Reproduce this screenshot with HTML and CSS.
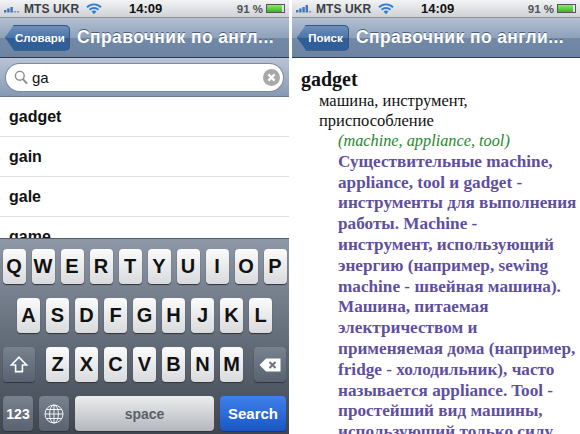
FILE: index.html
```html
<!DOCTYPE html>
<html lang="en">
<head>
    <meta charset="UTF-8">
    <meta name="viewport" content="width=device-width, initial-scale=1.0">
    <title>Dictionary</title>
    <link rel="stylesheet" href="styles.css">
</head>
<body>
    <div class="screens">
        <!-- search screen -->
        <div class="phone phone-left">
            <div class="status">
                <div class="status-left">
                    <svg class="signal" width="18" height="9" viewBox="0 0 18 9">
                        <rect x="0" y="6" width="2.4" height="2.5" fill="#3f74b8"/>
                        <rect x="3.2" y="4.5" width="2.4" height="4" fill="#3f74b8"/>
                        <rect x="6.4" y="3" width="2.4" height="5.5" fill="#3f74b8"/>
                        <rect x="9.6" y="7" width="2.4" height="1.5" fill="#8a94a0"/>
                        <rect x="12.8" y="7" width="2.4" height="1.5" fill="#8a94a0"/>
                    </svg>
                    <span class="carrier">MTS UKR</span>
                    <svg class="wifi" width="16" height="12" viewBox="0 0 16 12">
                        <path d="M1 4.2a10 10 0 0 1 14 0M3.6 6.8a6.4 6.4 0 0 1 8.8 0" fill="none" stroke="#2f7fd0" stroke-width="1.9"/>
                        <path d="M5.6 8.6a3.5 3.5 0 0 1 4.8 0L8 11.2z" fill="#2f7fd0"/>
                    </svg>
                </div>
                <span class="clock">14:09</span>
                <div class="status-right">
                    <span>91 %</span>
                    <div class="battery"><div class="battery-fill"></div></div>
                </div>
            </div>
            <div class="nav">
                <div class="back back-wide">Словари</div>
                <div class="nav-title">Справочник по англ...</div>
            </div>
            <div class="searchbar">
                <div class="searchbox">
                    <svg width="14" height="15" viewBox="0 0 14 15">
                        <circle cx="5.8" cy="5.8" r="4.4" fill="none" stroke="#8c8c8c" stroke-width="1.4"/>
                        <path d="M9 9.2l4 4.4" stroke="#8c8c8c" stroke-width="2"/>
                    </svg>
                    <span class="query">ga</span>
                    <svg class="clear" width="17" height="17" viewBox="0 0 17 17">
                        <circle cx="8.5" cy="8.5" r="8.5" fill="#a8a8a8"/>
                        <path d="M5.4 5.4l6.2 6.2M11.6 5.4l-6.2 6.2" stroke="#fff" stroke-width="2.2"/>
                    </svg>
                </div>
            </div>
            <div class="list">
                <div class="row">gadget</div>
                <div class="row">gain</div>
                <div class="row">gale</div>
                <div class="row">game</div>
            </div>
            <div class="keyboard">
                <div class="key-row">
                    <div class="key">Q</div><div class="key">W</div><div class="key">E</div><div class="key">R</div><div class="key">T</div><div class="key">Y</div><div class="key">U</div><div class="key">I</div><div class="key">O</div><div class="key">P</div>
                </div>
                <div class="key-row">
                    <div class="key">A</div><div class="key">S</div><div class="key">D</div><div class="key">F</div><div class="key">G</div><div class="key">H</div><div class="key">J</div><div class="key">K</div><div class="key">L</div>
                </div>
                <div class="key-row key-row-3">
                    <div class="key key-dark key-side">
                        <svg width="18" height="17" viewBox="0 0 18 17">
                            <path d="M9 1.2L16.6 9H12.4V15.6H5.6V9H1.4z" fill="none" stroke="#fff" stroke-width="1.6"/>
                        </svg>
                    </div>
                    <div class="letters">
                        <div class="key">Z</div><div class="key">X</div><div class="key">C</div><div class="key">V</div><div class="key">B</div><div class="key">N</div><div class="key">M</div>
                    </div>
                    <div class="key key-dark key-side">
                        <svg width="22" height="14" viewBox="0 0 22 14">
                            <path d="M7 0.5H21.5V13.5H7L0.5 7z" fill="#fff"/>
                            <path d="M10.5 4l6 6M16.5 4l-6 6" stroke="#6a7482" stroke-width="2"/>
                        </svg>
                    </div>
                </div>
                <div class="key-row key-row-4">
                    <div class="key key-dark key-123">123</div>
                    <div class="key key-dark key-globe">
                        <svg width="20" height="20" viewBox="0 0 20 20" fill="none" stroke="#fff" stroke-width="0.9">
                            <circle cx="10" cy="10" r="9"/>
                            <ellipse cx="10" cy="10" rx="4.4" ry="9"/>
                            <path d="M10 1v18M1 10h18M2.2 5.5h15.6M2.2 14.5h15.6"/>
                        </svg>
                    </div>
                    <div class="key key-space">space</div>
                    <div class="key key-search">Search</div>
                </div>
            </div>
        </div>

        <!-- article screen -->
        <div class="phone phone-right">
            <div class="status">
                <div class="status-left">
                    <svg class="signal" width="18" height="9" viewBox="0 0 18 9">
                        <rect x="0" y="6" width="2.4" height="2.5" fill="#3f74b8"/>
                        <rect x="3.2" y="4.5" width="2.4" height="4" fill="#3f74b8"/>
                        <rect x="6.4" y="3" width="2.4" height="5.5" fill="#3f74b8"/>
                        <rect x="9.6" y="1" width="2.4" height="7.5" fill="#3f74b8"/>
                        <rect x="12.8" y="7" width="2.4" height="1.5" fill="#8a94a0"/>
                    </svg>
                    <span class="carrier">MTS UKR</span>
                    <svg class="wifi" width="16" height="12" viewBox="0 0 16 12">
                        <path d="M1 4.2a10 10 0 0 1 14 0M3.6 6.8a6.4 6.4 0 0 1 8.8 0" fill="none" stroke="#2f7fd0" stroke-width="1.9"/>
                        <path d="M5.6 8.6a3.5 3.5 0 0 1 4.8 0L8 11.2z" fill="#2f7fd0"/>
                    </svg>
                </div>
                <span class="clock">14:09</span>
                <div class="status-right">
                    <span>91 %</span>
                    <div class="battery"><div class="battery-fill"></div></div>
                </div>
            </div>
            <div class="nav">
                <div class="back">Поиск</div>
                <div class="nav-title">Справочник по англи...</div>
            </div>
            <div class="article">
                <div class="word">gadget</div>
                <div class="meaning">машина, инструмент,<br>приспособление</div>
                <div class="detail">
                    <div class="synonyms">(machine, appliance, tool)</div>
                    <div class="note">Существительные machine,<br>appliance, tool и gadget -<br>инструменты для выполнения<br>работы. Machine -<br>инструмент, использующий<br>энергию (например, sewing<br>machine - швейная машина).<br>Машина, питаемая<br>электричеством и<br>применяемая дома (например,<br>fridge - холодильник), часто<br>называется appliance. Tool -<br>простейший вид машины,<br>использующий только силу</div>
                </div>
            </div>
        </div>
    </div>
</body>
</html>
```

FILE: styles.css
```css
body {
    margin: 0;
    padding: 0;
    background: #fff;
    font-family: "Liberation Sans", Arial, sans-serif;
}

.screens {
    display: flex;
    justify-content: space-between;
    width: 580px;
    height: 434px;
    overflow: hidden;
    background: #fff;
}

.phone {
    display: flex;
    flex-direction: column;
    height: 434px;
    overflow: hidden;
    background: #fff;
}

.phone-left {
    width: 289px;
}

.phone-right {
    width: 288px;
}

/* status bar */
.status {
    display: flex;
    align-items: center;
    flex: none;
    height: 18px;
    padding: 0 3px 0 4px;
    box-sizing: border-box;
    background: linear-gradient(#f2f3f4, #cfd2d6);
    border-bottom: 1px solid #8b8f96;
    font-size: 11.5px;
    color: #3c3f45;
}

.status-left {
    display: flex;
    align-items: center;
    width: 125px;
    flex: none;
}

.signal {
    margin-right: 2px;
}

.carrier {
    font-weight: bold;
    font-size: 12px;
    letter-spacing: 0.1px;
    margin-right: 7px;
    white-space: nowrap;
}

.clock {
    font-weight: bold;
    font-size: 13px;
    color: #111;
}

.status-right {
    display: flex;
    align-items: center;
    gap: 3px;
    margin-left: auto;
    font-weight: bold;
    color: #50545a;
}

.battery {
    width: 17px;
    height: 7px;
    border: 1px solid #555;
    margin-right: 1px;
}

.battery-fill {
    width: 91%;
    height: 100%;
    background: linear-gradient(#8fe66c, #35b81e);
}

/* navigation bar */
.nav {
    display: flex;
    align-items: center;
    flex: none;
    gap: 7px;
    height: 40px;
    padding: 0 4px 0 5px;
    box-sizing: border-box;
    background: linear-gradient(#b3c0d2 0%, #8ea2bb 50%, #7289a7 51%, #6c83a2 100%);
    border-bottom: 1px solid #2f3a4a;
}

.back {
    display: flex;
    align-items: center;
    justify-content: center;
    height: 26px;
    width: 52px;
    padding-left: 5px;
    box-sizing: border-box;
    flex: none;
    color: #fff;
    font-size: 11.5px;
    font-weight: bold;
    border-radius: 5px;
    background: linear-gradient(#6f92bf 0%, #4b74a8 50%, #2f5d98 51%, #305f9a 100%);
    box-shadow: inset 0 0 0 1px #3b5578;
    clip-path: polygon(0 50%, 9px 0, 100% 0, 100% 100%, 9px 100%);
}

.back-wide {
    width: 65px;
}

.nav-title {
    color: #fff;
    font-size: 17.5px;
    font-weight: bold;
    letter-spacing: 0.4px;
    white-space: nowrap;
    text-shadow: 0 -1px 0 #4a5f7c;
}

/* search */
.searchbar {
    flex: none;
    height: 39px;
    padding: 6px 6px;
    box-sizing: border-box;
    background: linear-gradient(#b9c5d5, #8699b3);
    border-bottom: 1px solid #6b7a8d;
}

.searchbox {
    display: flex;
    align-items: center;
    height: 27px;
    padding: 0 3px 0 8px;
    box-sizing: border-box;
    background: #fff;
    border-radius: 14px;
    box-shadow: 0 0 0 1px #7d8ba0;
}

.query {
    flex: 1;
    margin-left: 4px;
    font-size: 15px;
    color: #111;
}

/* result list */
.list {
    flex: 1;
    min-height: 0;
    overflow: hidden;
}

.row {
    height: 40px;
    padding: 11px 0 0 9px;
    box-sizing: border-box;
    border-bottom: 1px solid #e2e2e2;
    font-size: 16px;
    font-weight: bold;
    color: #111;
}

/* keyboard */
.keyboard {
    display: flex;
    flex-direction: column;
    flex: none;
    gap: 14px;
    height: 196px;
    padding: 10px 3px 0;
    box-sizing: border-box;
    background: linear-gradient(#8d97a5, #68727f 45%, #3f4650);
    border-top: 1px solid #555c66;
}

.key-row {
    display: flex;
    justify-content: center;
    gap: 6px;
    height: 35px;
}

.key {
    display: flex;
    align-items: center;
    justify-content: center;
    width: 23px;
    height: 35px;
    flex: none;
    font-size: 20px;
    font-weight: bold;
    color: #111;
    border-radius: 4px;
    background: linear-gradient(#fbfbfb, #d9dadd);
    box-shadow: 0 1px 1px #333;
}

.key-row-3 {
    justify-content: space-between;
}

.letters {
    display: flex;
    gap: 6px;
}

.key-dark {
    color: #fff;
    background: linear-gradient(#78818e, #596270);
}

.key-side {
    width: 32px;
}

.key-row-4 {
    justify-content: flex-start;
}

.key-123 {
    width: 30px;
    font-size: 14px;
}

.key-globe {
    width: 30px;
}

.key-space {
    flex: 1;
    width: auto;
    font-size: 14px;
    color: #5a6068;
    background: linear-gradient(#eceded, #b4b7bc);
}

.key-search {
    width: 66px;
    font-size: 15px;
    color: #fff;
    background: linear-gradient(#3f80ec, #1a56c6);
}

/* article */
.article {
    padding: 10px 0 0 9px;
    font-family: "Liberation Serif", "Times New Roman", serif;
    color: #111;
}

.word {
    font-size: 20px;
    font-weight: bold;
    line-height: 23px;
}

.meaning {
    margin-left: 18px;
    font-size: 16.5px;
    line-height: 20px;
}

.detail {
    margin-left: 37px;
    white-space: nowrap;
    line-height: 20.8px;
}

.synonyms {
    font-size: 16.3px;
    font-style: italic;
    color: #1f8a2a;
}

.note {
    font-size: 17.2px;
    font-weight: bold;
    color: #5f4f9f;
}
```
